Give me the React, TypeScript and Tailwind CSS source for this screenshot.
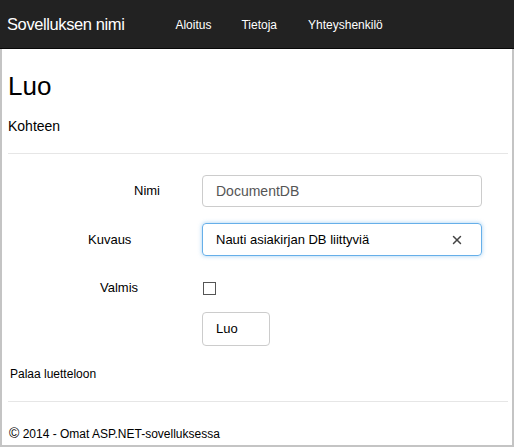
import { X } from 'lucide-react'

const font = { fontFamily: '"Liberation Sans", Arial, sans-serif' }

export default function App() {
  return (
    <div className="w-[514px] h-[447px] bg-white text-[#222] overflow-hidden" style={font}>
      <nav className="h-[49px] bg-[#222] border-b border-[#080808] flex items-center text-white">
        <span className="pl-[7px] text-[16.5px] tracking-[-0.4px]">Sovelluksen nimi</span>
        <div className="flex items-center text-[12px] ml-[51px] gap-[30px] pt-[1px]">
          <span>Aloitus</span>
          <span>Tietoja</span>
          <span className="ml-[1px]">Yhteyshenkilö</span>
        </div>
      </nav>

      <div className="w-[514px] h-[398px] border-l-2 border-r-2 border-b-2 border-[#c4c4c4] pl-[6px] pr-[4px]">
        <h1 className="text-[26px] leading-none pt-[24px] text-black">Luo</h1>
        <h4 className="text-[14px] pt-[17px] text-black">Kohteen</h4>
        <hr className="border-t border-[#e6e6e6] mt-[16px]" />

        <div className="flex flex-col pt-[21px] text-[13px] text-black">
          <div className="flex items-center h-[32px]">
            <label className="w-[194px] pl-[126px]">Nimi</label>
            <div className="w-[280px] h-[32px] border border-[#ccc] rounded-[4px] flex items-center px-[13px] text-[14px] text-[#555]">
              DocumentDB
            </div>
          </div>

          <div className="flex items-center h-[33px] mt-[16px]">
            <label className="w-[194px] pl-[80px]">Kuvaus</label>
            <div className="w-[280px] h-[33px] border border-[#66afe9] rounded-[4px] flex items-center pl-[13px] pr-[17px] shadow-[0_0_4px_rgba(102,175,233,0.6)]">
              <span className="flex-1">Nauti asiakirjan DB liittyviä</span>
              <X size={14} strokeWidth={2.5} className="text-[#444]" />
            </div>
          </div>

          <div className="flex items-center h-[34px] mt-[15px]">
            <label className="w-[195px] pl-[92px]">Valmis</label>
            <div className="w-[13px] h-[13px] border border-[#555] bg-white" />
          </div>

          <div className="flex mt-[7px]">
            <div className="w-[194px]" />
            <button className="w-[68px] h-[34px] border border-[#ccc] rounded-[4px] bg-white text-[13px] text-left pl-[13px] text-black">
              Luo
            </button>
          </div>
        </div>

        <p className="text-[12px] text-black mt-[19px] pl-[2px]">Palaa luetteloon</p>
        <hr className="border-t border-[#e6e6e6] mt-[18px]" />
        <p className="text-[12px] text-black mt-[23px] pl-[1px]">
          <span className="text-[14px] leading-none">©</span> 2014 - Omat ASP.NET-sovelluksessa
        </p>
      </div>
    </div>
  )
}
